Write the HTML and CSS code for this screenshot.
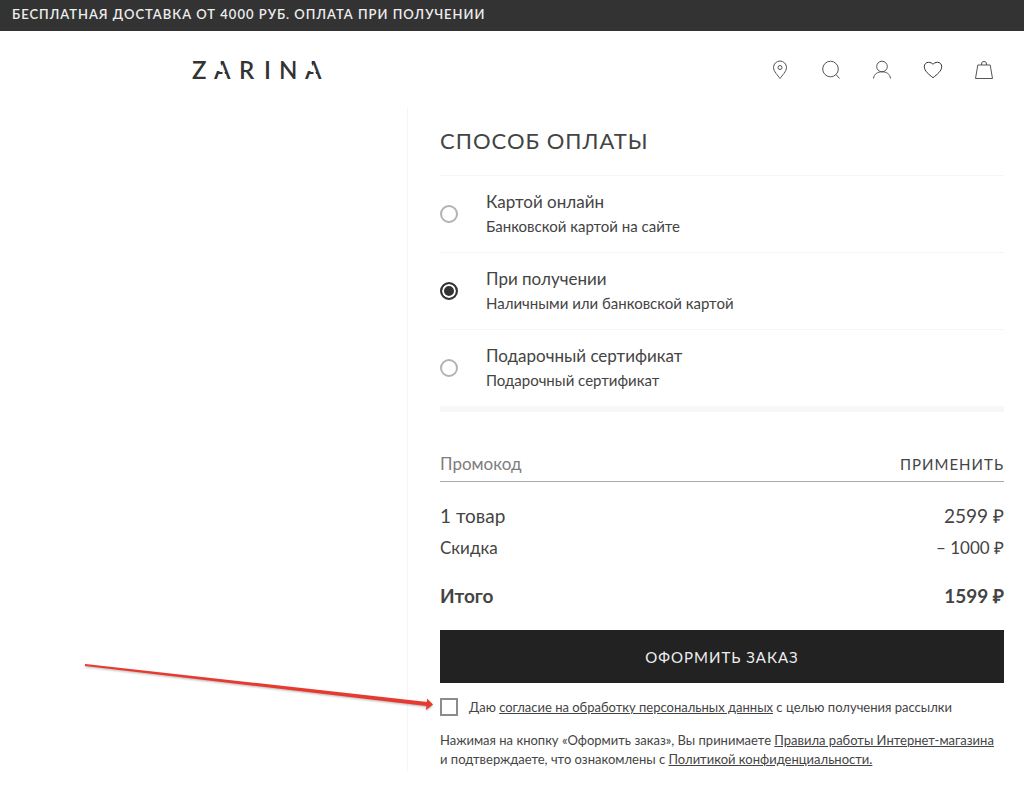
FILE: index.html
```html
<!DOCTYPE html>
<html lang="ru">
<head>
  <meta charset="UTF-8">
  <meta name="viewport" content="width=device-width, initial-scale=1.0">
  <title>ZARINA</title>
  <link rel="stylesheet" href="styles.css">
</head>
<body>
  <div class="promo-bar">Бесплатная доставка от 4000 руб. Оплата при получении</div>

  <header class="header">
    <a class="logo" href="#">
      <svg width="140" height="34" viewBox="0 0 140 34">
        <text class="logo-text" x="0 22 47 72 87 113" y="26">ZARINA</text>
        <!-- cuts in both letters A -->
        <g class="logo-cut">
          <path d="M20 18H31.500L28.500 10V6H20z"/>
          <path d="M30.500 18H32L34 23H30.500z"/>
          <path d="M111 18H122.500L119.500 10V6H111z"/>
          <path d="M121.500 18H123L125 23H121.500z"/>
        </g>
      </svg>
    </a>
    <nav class="icons">
      <a href="#" aria-label="Магазины">
        <svg width="20" height="20" viewBox="0 0 20 20"><path d="M10 18.500C8 15.500 3.500 11.500 3.500 7.500a6.500 6.500 0 0 1 13 0C16.500 11.500 12 15.500 10 18.500z"/><circle cx="10" cy="7.500" r="2"/></svg>
      </a>
      <a href="#" aria-label="Поиск">
        <svg width="20" height="20" viewBox="0 0 20 20"><circle cx="9.500" cy="9" r="7.800"/><path d="M15 14.500L18.500 18.500"/></svg>
      </a>
      <a href="#" aria-label="Профиль">
        <svg width="20" height="20" viewBox="0 0 20 20"><circle cx="10" cy="6.500" r="5.300"/><path d="M1.500 18.500C2 14 5.500 11.800 10 11.800S18 14 18.500 18.500"/></svg>
      </a>
      <a href="#" aria-label="Избранное">
        <svg class="heart" width="20" height="20" viewBox="0 0 20 20"><path d="M10 17.700C6 14.500 1.300 11 1.300 6.700 1.300 4 3.200 2.300 5.500 2.300 7.600 2.300 9 3.200 10 4.300 11 3.200 12.400 2.300 14.500 2.300 16.800 2.300 18.700 4 18.700 6.700 18.700 11 14 14.500 10 17.700z"/></svg>
      </a>
      <a href="#" aria-label="Корзина">
        <svg width="20" height="20" viewBox="0 0 20 20"><path d="M3.800 5H16.200L18.500 18.500H1.500zM7.500 5V4a2.500 2.500 0 0 1 5 0V5"/></svg>
      </a>
    </nav>
  </header>

  <main class="layout">
    <form class="checkout">
      <h1>Способ оплаты</h1>

      <div class="payments">
        <label class="payment">
          <input type="radio" name="payment">
          <span class="payment-text">
            <span class="payment-title">Картой онлайн</span>
            <span class="payment-note">Банковской картой на сайте</span>
          </span>
        </label>
        <label class="payment">
          <input type="radio" name="payment" checked>
          <span class="payment-text">
            <span class="payment-title">При получении</span>
            <span class="payment-note">Наличными или банковской картой</span>
          </span>
        </label>
        <label class="payment">
          <input type="radio" name="payment">
          <span class="payment-text">
            <span class="payment-title">Подарочный сертификат</span>
            <span class="payment-note">Подарочный сертификат</span>
          </span>
        </label>
      </div>

      <div class="promocode">
        <input type="text" placeholder="Промокод" aria-label="Промокод">
        <button type="button">Применить</button>
      </div>

      <dl class="summary">
        <div class="summary-row goods"><dt>1 товар</dt><dd>2599 ₽</dd></div>
        <div class="summary-row discount"><dt>Скидка</dt><dd>– 1000 ₽</dd></div>
        <div class="summary-row total"><dt>Итого</dt><dd>1599 ₽</dd></div>
      </dl>

      <button class="submit" type="submit">Оформить заказ</button>

      <div class="consent">
        <input type="checkbox" id="consent">
        <label for="consent">Даю <a href="#">согласие на обработку персональных данных</a> с целью получения рассылки</label>
        <svg class="arrow" width="348" height="48" viewBox="0 0 348 48">
          <path d="M0 0L342 38 342 34.500 348 40.500 341 46 341.500 42 0 2z"/>
        </svg>
      </div>

      <p class="terms">Нажимая на кнопку «Оформить заказ», Вы принимаете <a href="#">Правила работы Интернет-магазина</a> и подтверждаете, что ознакомлены с <a href="#">Политикой конфиденциальности.</a></p>
    </form>
  </main>
</body>
</html>
```
FILE: styles.css
```css
* {
  box-sizing: border-box;
}
body {
  margin: 0;
  background: #fff;
  color: #444;
  font-family: Lato, "Open Sans", sans-serif;
  font-size: 16px;
}
a {
  color: inherit;
}
input, button {
  font: inherit;
  color: inherit;
  margin: 0;
}
.promo-bar {
  padding: 0 12px 3px;
  background: #333;
  color: #eee;
  font-size: 13px;
  font-weight: 600;
  line-height: 28px;
  letter-spacing: 1px;
  text-transform: uppercase;
}
.header {
  display: flex;
  justify-content: space-between;
  align-items: center;
  height: 77px;
  padding: 0 30px 0 192px;
}
.logo {
  display: flex;
}
.logo-text {
  font-size: 24px;
  font-weight: 600;
  fill: #333;
}
.logo-cut {
  fill: #fff;
}
.icons {
  display: flex;
  gap: 31px;
}
.icons a {
  display: flex;
}
.icons svg {
  fill: none;
  stroke: #555;
  stroke-width: 1;
}
.icons .heart {
  stroke: #333;
}
.layout {
  padding-left: 407px;
}
.checkout {
  padding: 17px 20px 2px 32px;
  border-left: 1px solid #f5f5f5;
}
h1 {
  margin: 0 0 18px;
  font-size: 22px;
  font-weight: 400;
  line-height: 32px;
  letter-spacing: 1px;
  text-transform: uppercase;
}
.payments {
  border-bottom: 6px solid #f7f7f7;
}
.payment {
  display: flex;
  align-items: center;
  gap: 28px;
  padding: 13px 0;
  border-top: 1px solid #f5f5f5;
}
.payment input {
  appearance: none;
  width: 18px;
  height: 18px;
  border: 2px solid #b3b3b3;
  border-radius: 50%;
}
.payment input:checked {
  border-color: #333;
  background: #333;
  box-shadow: inset 0 0 0 2px #fff;
}
.payment-text {
  display: flex;
  flex-direction: column;
  line-height: 25px;
}
.payment-title {
  font-size: 17px;
}
.payment-note {
  font-size: 15px;
}
.promocode {
  display: flex;
  justify-content: space-between;
  align-items: center;
  margin-top: 34px;
  border-bottom: 1px solid #aaa;
}
.promocode input {
  flex: 1;
  min-width: 0;
  height: 35px;
  padding: 0;
  border: 0;
  background: none;
  font-size: 17px;
}
.promocode input::placeholder {
  color: #7d7d7d;
}
.promocode button {
  padding: 0;
  border: 0;
  background: none;
  font-size: 15px;
  letter-spacing: 1px;
  text-transform: uppercase;
}
.summary {
  margin: 18px 0;
}
.summary-row {
  display: flex;
  justify-content: space-between;
  line-height: 32px;
}
.summary dd {
  margin: 0;
}
.goods {
  font-size: 19px;
}
.discount {
  font-size: 17px;
}
.total {
  margin-top: 16px;
  font-size: 19px;
  font-weight: 700;
}
.submit {
  display: block;
  width: 100%;
  height: 53px;
  border: 0;
  background: #222;
  color: #eee;
  font-size: 15px;
  letter-spacing: 1px;
  text-transform: uppercase;
}
.consent {
  position: relative;
  display: flex;
  align-items: center;
  gap: 11px;
  margin-top: 15px;
  font-size: 13px;
}
.consent input {
  appearance: none;
  width: 18px;
  height: 18px;
  border: 2px solid #8c8c8c;
}
.arrow {
  position: absolute;
  top: -34px;
  right: calc(100% + 7px);
  fill: #e8392f;
  filter: drop-shadow(0 1px 1px rgba(0, 0, 0, 0.3));
}
.terms {
  margin: 15px 0 0;
  font-size: 13px;
  line-height: 19px;
}
```
